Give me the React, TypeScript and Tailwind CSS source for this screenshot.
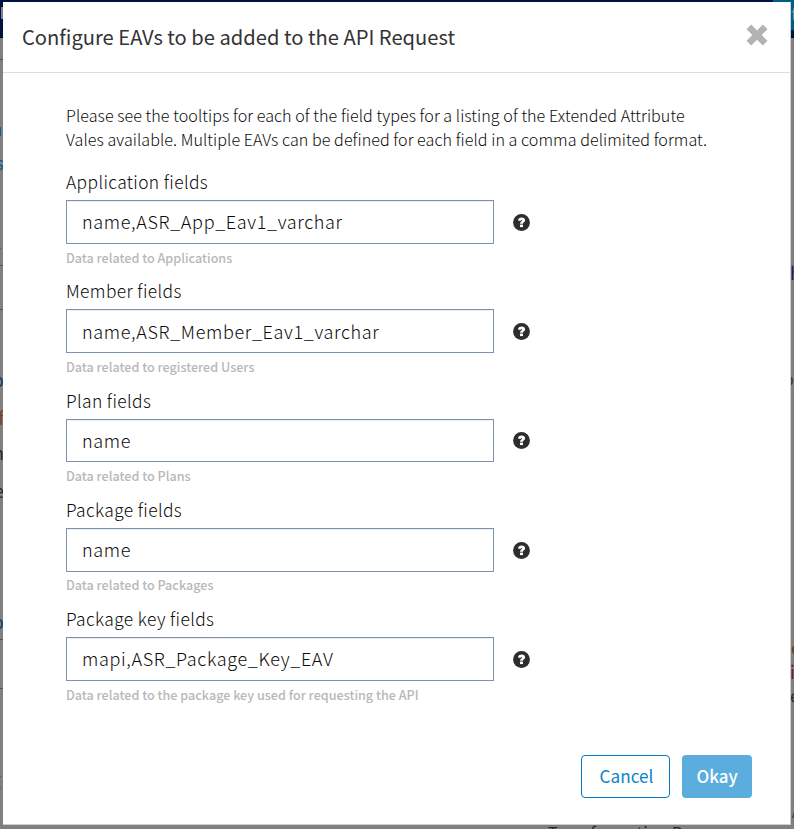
import React from "react";

type Field = { label: string; value: string; hint: string };

const fields: Field[] = [
  { label: "Application fields", value: "name,ASR_App_Eav1_varchar", hint: "Data related to Applications" },
  { label: "Member fields", value: "name,ASR_Member_Eav1_varchar", hint: "Data related to registered Users" },
  { label: "Plan fields", value: "name", hint: "Data related to Plans" },
  { label: "Package fields", value: "name", hint: "Data related to Packages" },
  { label: "Package key fields", value: "mapi,ASR_Package_Key_EAV", hint: "Data related to the package key used for requesting the API" },
];

function HelpIcon() {
  return (
    <svg className="mt-px block h-[17px] w-[17px] shrink-0" viewBox="0 0 17 17" aria-label="Help">
      <circle cx="8.5" cy="8.5" r="8.4" fill="#2d2d2d" />
      <path
        d="M5 6.5C5.1 4.4 6.5 3.4 8.6 3.4C10.8 3.4 12.1 4.6 12.1 6.2C12.1 8.2 10 8.2 10 9.7H7C7 7.6 9 7.5 9 6.5C9 5.6 7.7 5.7 7.5 6.9Z"
        fill="#fff"
      />
      <rect x="7" y="10.6" width="3" height="2.5" fill="#fff" />
    </svg>
  );
}

function CloseIcon() {
  return (
    <svg className="block h-[22px] w-[22px]" viewBox="0 0 22 22" aria-label="Close">
      <path
        d="M5.2 0.6L11 6.4L16.8 0.6L21.5 5.3L15.7 11.1L21.5 16.8L16.8 21.5L11 15.7L5.2 21.5L0.5 16.8L6.3 11.1L0.5 5.3Z"
        fill="#b3b3b3"
      />
    </svg>
  );
}

/* The dimmed page that shows around the edges of the dialog. */
function PageBehind() {
  return (
    <div className="absolute inset-0 flex flex-col overflow-hidden text-[18px] leading-5 text-[#222a35]">
      <div className="flex h-[38px] shrink-0 justify-between border-b border-black bg-[#001340]">
        <div className="ml-px mt-[7px] h-3 w-2 bg-[#7f7f8c]" />
        <div className="h-[30px] w-[21px] bg-[#005f88] pl-[18px] pt-[3px] text-[#8095a0]">t</div>
      </div>
      <div className="flex h-[784px] shrink-0 justify-between">
        <div className="flex w-1 flex-col items-end">
          <div className="mt-[21px] h-px w-1 bg-[#4a4f57]" />
          <div className="mr-[3px] mt-[67px] h-[9px] w-px bg-[#1f5d87]" />
          <span className="mt-[16px] text-[#075b86]">s</span>
          <div className="mr-[3px] mt-[76px] h-px w-px bg-[#1f6f97]" />
          <div className="mt-[16px] h-px w-1 bg-[#4f545e]" />
          <div className="mt-[43px] h-px w-1 bg-[#4f545e]" />
          <span className="mt-[59px] text-[#123d63]">o</span>
          <span className="mt-[18px] text-[#793f2e]">f</span>
          <span className="mt-[15px]">m</span>
          <span className="mt-[18px]">e</span>
          <span className="mt-[111px] text-[#123d63]">o</span>
          <div className="mt-[8px] h-px w-1 bg-[#4f545e]" />
          <div className="mt-[48px] h-px w-1 bg-[#4f545e]" />
          <div className="mr-[3px] mt-[87px] h-px w-px bg-[#1f6f97]" />
          <div className="mr-[3px] mt-[11px] h-px w-px bg-[#1f6f97]" />
        </div>
        <div className="flex w-1 flex-col items-start">
          <span className="mt-[224px] text-[#1a2552]">h</span>
          <span className="mt-[86px] self-end text-[#453820]">o</span>
          <span className="ml-px mt-[249px] text-[#6b3821]">e</span>
          <span className="mt-[4px] text-[#701f24]">i</span>
          <span className="mt-[4px]">e</span>
          <span className="ml-[2px] mt-[95px] text-[#55361c]">A</span>
        </div>
      </div>
      <p className="ml-[548px] whitespace-nowrap text-[16px] tracking-[0.35px]">Transformation P</p>
    </div>
  );
}

export default function App() {
  return (
    <div className="relative h-[829px] w-[794px] overflow-hidden bg-[#808080] font-['Noto_Sans_CJK_SC',sans-serif]">
      <PageBehind />
      <div className="relative ml-[3px] mt-[2px] flex h-[823px] w-[788px] flex-col border-b border-r border-[#cfcfcf] bg-white text-[#333]">
        <header className="flex h-[71px] shrink-0 items-start justify-between border-b border-[#dedede] pl-[19px] pr-[22px]">
          <h1 className="mt-[20px] text-[20.15px] font-normal leading-[30px]">Configure EAVs to be added to the API Request</h1>
          <button className="mt-[22px]">
            <CloseIcon />
          </button>
        </header>

        <main className="pl-[63px] pt-[30px]">
          <p className="whitespace-nowrap text-[16.1px] font-light leading-[24px] tracking-[0.06px] text-[#0a0a0a]">
            Please see the tooltips for each of the field types for a listing of the Extended Attribute
            <br />
            Vales available. Multiple EAVs can be defined for each field in a comma delimited format.
          </p>
          <div className="mt-[19px]">
            {fields.map((f) => (
              <section key={f.label} className="h-[109.25px]">
                <label className="block h-[30px] pt-[0.2px] text-[17.4px] font-light leading-[24px] tracking-[0.38px] text-[#0a0a0a]">
                  {f.label}
                </label>
                <div className="flex items-center gap-[19px]">
                  <input
                    className="h-[43.8px] w-[428px] border border-[#7c92ae] bg-white px-[15px] pb-[1.2px] text-[18px] font-light tracking-[0.66px] text-[#0a0a0a] shadow-[inset_0_1px_1px_rgba(0,0,0,0.075)] outline-none"
                    defaultValue={f.value}
                  />
                  <HelpIcon />
                </div>
                <p className="mt-[4.9px] text-[12.6px] font-medium leading-[18px] text-[#b8b8b8]">{f.hint}</p>
              </section>
            ))}
          </div>
        </main>

        <footer className="mt-auto flex justify-end gap-3 pb-[26px] pr-[38px] text-[17.2px]">
          <button className="h-[43px] w-[89px] rounded-[4px] border border-[#0079c1] pb-[2px] pl-[2px] text-[#0c83c9]">Cancel</button>
          <button className="h-[43px] w-[70px] rounded-[4px] bg-[#5badde] pb-[2px] text-[16.9px] font-medium text-white">Okay</button>
        </footer>
      </div>
    </div>
  );
}
